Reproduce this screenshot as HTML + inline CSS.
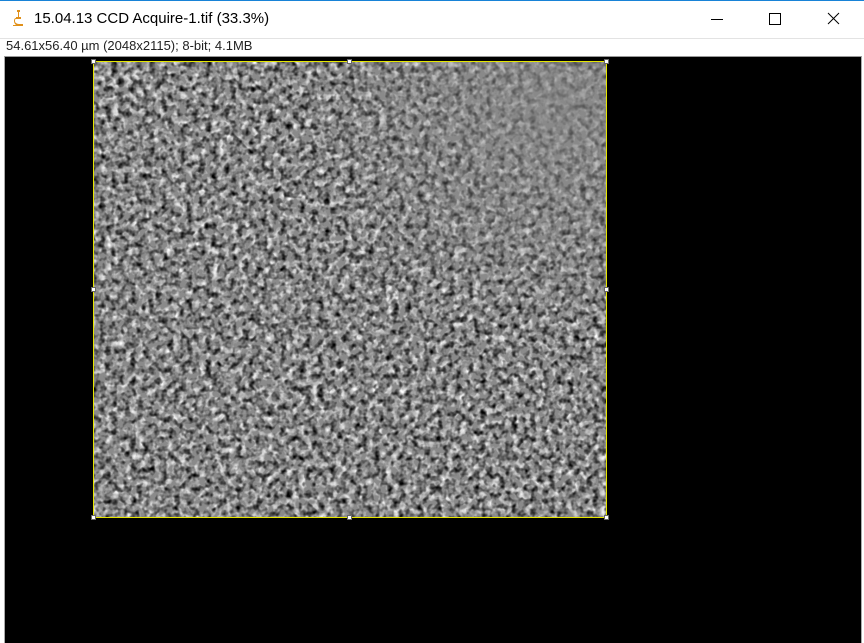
<!DOCTYPE html>
<html><head><meta charset="utf-8"><style>
html,body{margin:0;padding:0;width:864px;height:642px;overflow:hidden;background:#fff;font-family:"Liberation Sans",sans-serif}
.top{position:absolute;left:0;top:0;width:864px;height:1px;background:#1883d7}
.title{position:absolute;left:34px;top:10px;font-size:15px;color:#000}
.info{position:absolute;left:6px;top:38px;font-size:13px;color:#222}
.sep{position:absolute;left:0;top:38px;width:864px;height:1px;background:#e3e3e3}
.black{position:absolute;left:4px;top:56px;width:856px;height:586px;background:#000;border-left:1px solid #aaa;border-right:1px solid #aaa;border-top:1px solid #999}
.img{position:absolute;left:93px;top:61px;width:514px;height:457px;overflow:hidden;background:#888}
.bd{position:absolute;left:93px;top:61px;width:514px;height:457px;border:1px solid #e6e600;box-sizing:border-box}
.h{position:absolute;width:5px;height:5px;background:#fff;border:1px solid #666;box-sizing:border-box}
</style></head><body>
<div class="top"></div>
<svg style="position:absolute;left:11px;top:9px" width="14" height="18" viewBox="0 0 14 18"><path d="M6 1h3v2H8v5h2v2H5V8h2V3H6z M3 12c0-2 1-3 2-3v1c-1 0-1 1-1 2 0 2 2 3 5 3h3v2H2v-1h3c-1-1-2-2-2-4z" fill="#e0901a"/></svg>
<div class="title">15.04.13 CCD Acquire-1.tif (33.3%)</div>
<svg style="position:absolute;left:700px;top:8px" width="160" height="26"><line x1="11" y1="11.5" x2="23" y2="11.5" stroke="#000"/><rect x="69.5" y="5.5" width="11" height="11" fill="none" stroke="#000"/><path d="M128 5L139 16M139 5L128 16" stroke="#000"/></svg>
<div class="sep"></div>
<div class="info">54.61x56.40 µm (2048x2115); 8-bit; 4.1MB</div>
<div class="black"></div>
<div class="img">
<svg width="514" height="457">
<defs>
<filter id="n" x="0" y="0" width="100%" height="100%">
<feTurbulence type="fractalNoise" baseFrequency="0.16 0.16" numOctaves="2" seed="4"/>
<feColorMatrix type="matrix" values="0 0 0 0 0  0 0 0 0 0  0 0 0 0 0  2.4 0 0 0 -1.05"/>
</filter>
<filter id="n2" x="0" y="0" width="100%" height="100%">
<feTurbulence type="fractalNoise" baseFrequency="0.15 0.15" numOctaves="2" seed="9"/>
<feColorMatrix type="matrix" values="0 0 0 0 1  0 0 0 0 1  0 0 0 0 1  2.4 0 0 0 -1.05"/>
</filter>
<radialGradient id="g" cx="0.9" cy="0.1" r="0.5"><stop offset="0" stop-color="#888" stop-opacity="0.7"/><stop offset="1" stop-color="#888" stop-opacity="0"/></radialGradient>
</defs>
<rect width="514" height="457" fill="#8a8a8a"/>
<rect width="514" height="457" filter="url(#n2)"/>
<rect width="514" height="457" filter="url(#n)"/>
<rect width="514" height="457" fill="url(#g)"/>
</svg>
</div>
<div class="bd"></div>
<div class="h" style="left:91px;top:59px"></div><div class="h" style="left:347px;top:59px"></div><div class="h" style="left:604px;top:59px"></div>
<div class="h" style="left:91px;top:287px"></div><div class="h" style="left:604px;top:287px"></div>
<div class="h" style="left:91px;top:515px"></div><div class="h" style="left:347px;top:515px"></div><div class="h" style="left:604px;top:515px"></div>
</body></html>
